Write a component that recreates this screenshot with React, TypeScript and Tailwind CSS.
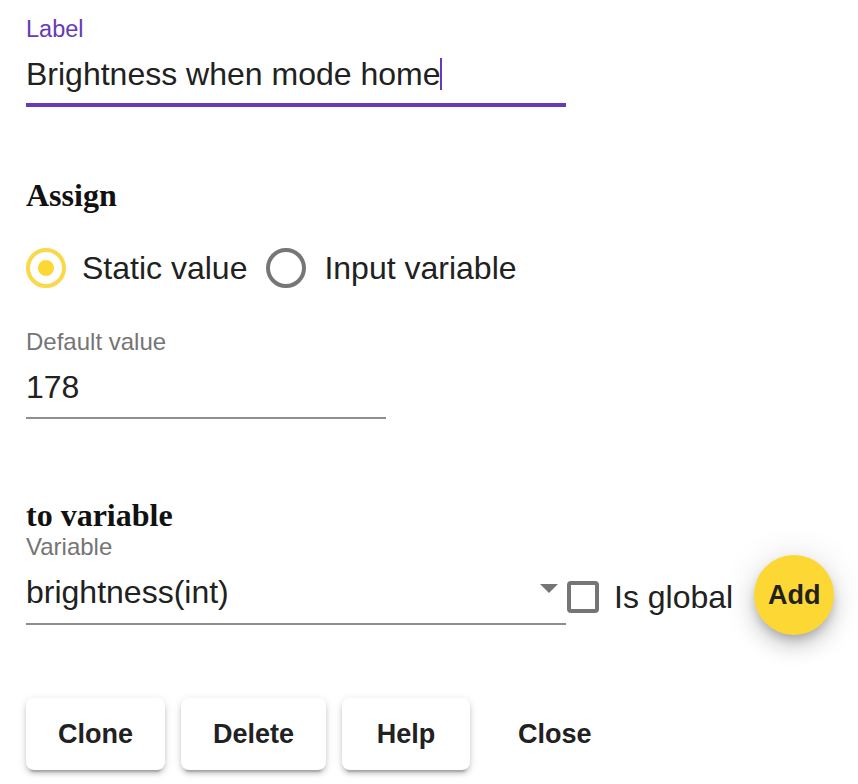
import React from "react";

const sans = { fontFamily: '"Liberation Sans", Arial, Helvetica, sans-serif' };

function Btn({ children, text }: { children: React.ReactNode; text?: boolean }) {
  return (
    <button
      className={
        "h-[72px] px-[32px] min-w-[128px] rounded-[8px] text-[27px] font-bold text-[#212121] leading-none " +
        (text
          ? "bg-transparent"
          : "bg-white shadow-[0px_6px_2px_-4px_rgba(0,0,0,0.2),0px_4px_4px_0px_rgba(0,0,0,0.14),0px_2px_10px_0px_rgba(0,0,0,0.12)]")
      }
    >
      {children}
    </button>
  );
}

export default function App() {
  return (
    <div className="w-[858px] h-[784px] bg-white text-[#212121] overflow-hidden px-[26px]" style={sans}>
      {/* Label field */}
      <div className="w-[540px] pt-[17px]">
        <div className="text-[23.5px] leading-[24px] text-[#673ab7]">Label</div>
        <div className="mt-[14px] h-[38px] text-[32px] leading-[38px] flex items-center">
          <span>Brightness when mode home</span>
          <span className="inline-block w-[2px] h-[32px] bg-[#673ab7]" />
        </div>
        <div className="mt-[10px] h-[4px] bg-[#673ab7]" />
      </div>

      {/* Assign */}
      <div
        className="mt-[70px] text-[32px] leading-[36px] font-bold text-[#111]"
        style={{ fontFamily: '"Liberation Serif", "Times New Roman", serif' }}
      >
        Assign
      </div>

      <div className="mt-[31px] h-[48px] flex items-center text-[32px]">
        <span className="w-[40px] h-[40px] rounded-full border-[4px] border-[#f9d84a] flex items-center justify-center">
          <span className="w-[16px] h-[16px] rounded-full bg-[#fdd835]" />
        </span>
        <span className="ml-[16px]">Static value</span>
        <span className="ml-[19px] w-[40px] h-[40px] rounded-full border-[4px] border-[#767676]" />
        <span className="ml-[18px]">Input variable</span>
      </div>

      {/* Default value */}
      <div className="w-[360px] mt-[38px]">
        <div className="text-[24px] leading-[24px] text-[#757575]">Default value</div>
        <div className="mt-[14px] h-[38px] text-[32px] leading-[38px]">178</div>
        <div className="mt-[11px] h-[2px] bg-[#8e8e8e]" />
      </div>

      {/* to variable */}
      <div
        className="mt-[78px] text-[32px] leading-[36px] font-bold text-[#111]"
        style={{ fontFamily: '"Liberation Serif", "Times New Roman", serif' }}
      >
        to variable
      </div>

      <div className="mt-[2px] flex items-start">
        <div className="w-[540px] shrink-0">
          <div className="text-[24px] leading-[24px] text-[#757575]">Variable</div>
          <div className="mt-[14px] h-[38px] text-[32px] leading-[38px] flex items-center justify-between">
            <span>brightness(int)</span>
            <svg width="18" height="10" viewBox="0 0 18 10" className="mr-[8px] mt-[-6px]">
              <path d="M0 0 L18 0 L9 9 Z" fill="#757575" />
            </svg>
          </div>
          <div className="mt-[12px] h-[2px] bg-[#8e8e8e]" />
        </div>
        <div className="mt-[20px] h-[80px] flex items-center shrink-0">
          <span className="ml-[1px] w-[32px] h-[32px] shrink-0 rounded-[4px] border-[4px] border-[#757575] mt-[4px]" />
          <span className="ml-[15px] text-[32px] leading-[38px] whitespace-nowrap mt-[4px]">Is global</span>
          <button className="ml-[21px] w-[80px] h-[80px] shrink-0 rounded-full bg-[#fdd835] text-[27px] font-bold text-[#212121] shadow-[0px_6px_10px_-2px_rgba(0,0,0,0.2),0px_12px_20px_0px_rgba(0,0,0,0.14),0px_2px_36px_0px_rgba(0,0,0,0.12)]">
            Add
          </button>
        </div>
      </div>

      {/* Buttons */}
      <div className="mt-[63px] flex gap-[16px]">
        <Btn>Clone</Btn>
        <Btn>Delete</Btn>
        <Btn>Help</Btn>
        <Btn text>Close</Btn>
      </div>
    </div>
  );
}
